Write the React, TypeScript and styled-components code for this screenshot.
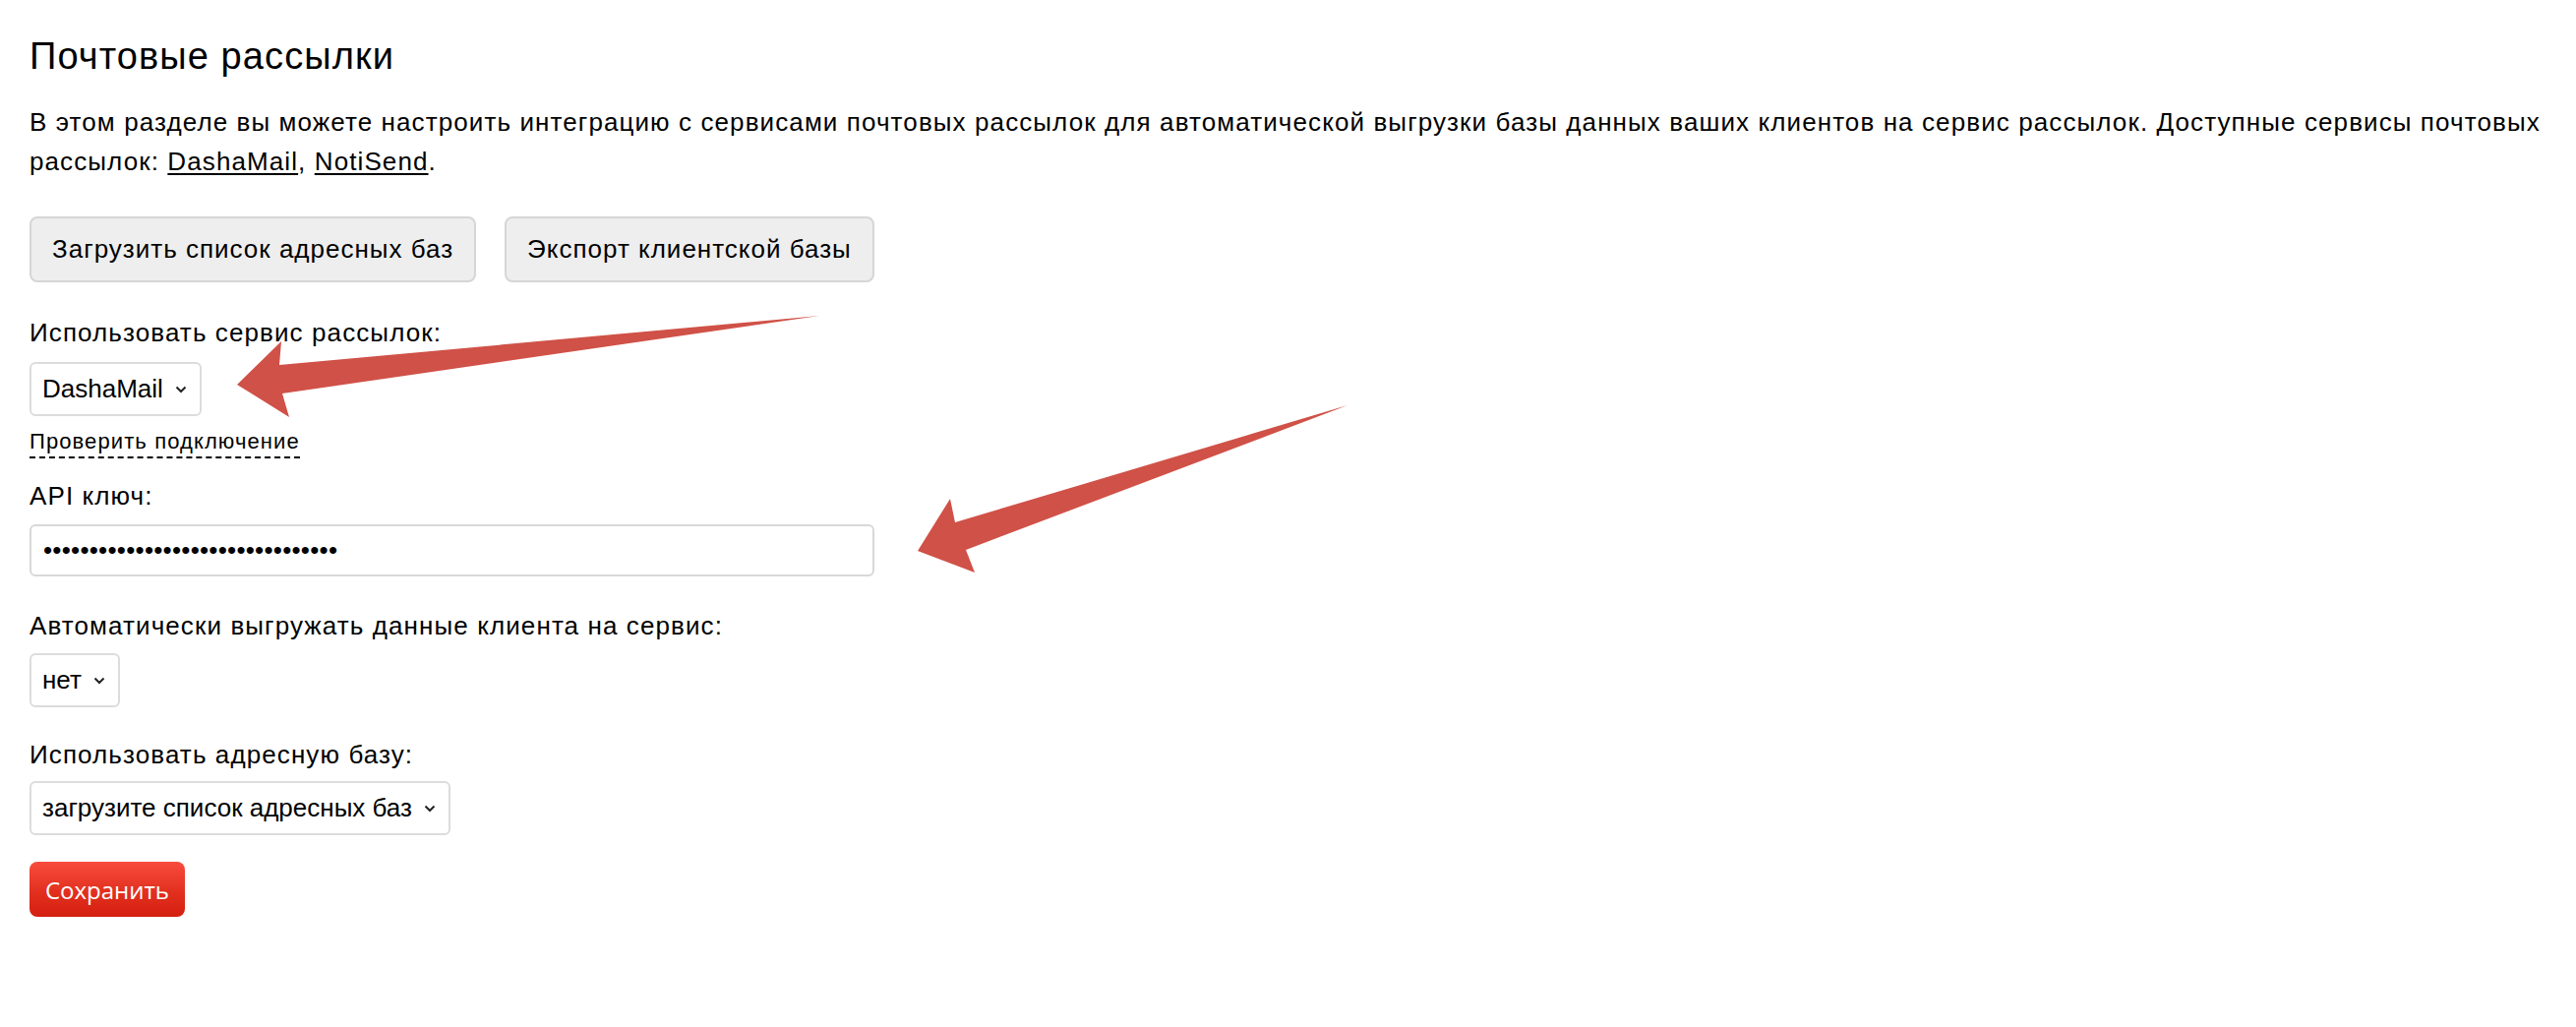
import React from "react";
import styled, { createGlobalStyle } from "styled-components";

const GlobalStyle = createGlobalStyle`
  html, body { margin: 0; padding: 0; background: #ffffff; }
  body {
    font-family: "Liberation Sans", Arial, sans-serif;
    color: #000000;
  }
  * { box-sizing: border-box; }
`;

const Page = styled.div`
  position: relative;
  padding: 35px 16px 60px 30px;
`;

const Title = styled.h1`
  margin: 0;
  font-size: 38px;
  line-height: 44px;
  font-weight: normal;
  letter-spacing: 1.1px;
`;

const Intro = styled.p`
  margin: 25px 0 0 0;
  font-size: 26px;
  line-height: 40px;
  letter-spacing: 1.1px;
`;

const ServiceLink = styled.a`
  color: #000;
  text-decoration: underline;
  text-underline-offset: 3px;
  text-decoration-thickness: 2px;
`;

const ButtonRow = styled.div`
  display: flex;
  gap: 29px;
  margin-top: 36px;
`;

const GreyButton = styled.button`
  height: 67px;
  padding: 0 21px;
  background: #eeeeee;
  border: 2px solid #d6d6d6;
  border-radius: 8px;
  font-family: "Liberation Sans", Arial, sans-serif;
  font-size: 26px;
  letter-spacing: 1px;
  color: #000;
`;

const Label = styled.div<{ $top: number }>`
  margin-top: ${(p) => p.$top}px;
  font-size: 26px;
  line-height: 40px;
  letter-spacing: 1.1px;
`;

const SelectBox = styled.div<{ $top: number }>`
  margin-top: ${(p) => p.$top}px;
  display: inline-flex;
  align-items: center;
  gap: 12px;
  height: 55px;
  padding: 0 13px 0 11px;
  border: 2px solid #dcdcdc;
  border-radius: 6px;
  font-size: 26px;
  background: #fff;
`;

const FieldRow = styled.div`
  display: flex;
`;

const CheckLink = styled.span`
  display: inline-block;
  margin-top: 11px;
  font-size: 22px;
  line-height: 30px;
  letter-spacing: 1.1px;
  border-bottom: 2px dashed #000;
`;

const PasswordInput = styled.input`
  display: block;
  margin-top: 9px;
  width: 859px;
  height: 53px;
  padding: 0 12px;
  border: 2px solid #d8d8d8;
  border-radius: 6px;
  font-family: "Liberation Sans", Arial, sans-serif;
  font-size: 26px;
  letter-spacing: 0.25px;
  color: #000;
  outline: none;
`;

const SaveButton = styled.button`
  display: block;
  margin-top: 27px;
  width: 158px;
  height: 56px;
  border: none;
  border-radius: 8px;
  background: linear-gradient(to bottom, #f84c3e 0%, #e2301f 55%, #d41f0f 100%);
  color: #ffffff;
  font-family: "Open Sans", "Noto Sans", sans-serif;
  font-size: 24px;
  padding: 0;
`;

const ArrowLayer = styled.svg`
  position: absolute;
  left: 0;
  top: 0;
  width: 1400px;
  height: 700px;
  pointer-events: none;
`;

const Chevron = () => (
  <svg width="12" height="8" viewBox="0 0 12 8">
    <path d="M1.5 1.5 L6 6 L10.5 1.5" fill="none" stroke="#222" strokeWidth="2" />
  </svg>
);

export default function App() {
  return (
    <>
      <GlobalStyle />
      <Page>
        <Title>Почтовые рассылки</Title>
        <Intro>
          В этом разделе вы можете настроить интеграцию с сервисами почтовых рассылок для
          автоматической выгрузки базы данных ваших клиентов на сервис рассылок. Доступные
          сервисы почтовых рассылок: <ServiceLink href="#">DashaMail</ServiceLink>,{" "}
          <ServiceLink href="#">NotiSend</ServiceLink>.
        </Intro>
        <ButtonRow>
          <GreyButton>Загрузить список адресных баз</GreyButton>
          <GreyButton>Экспорт клиентской базы</GreyButton>
        </ButtonRow>

        <Label $top={31}>Использовать сервис рассылок:</Label>
        <FieldRow>
          <SelectBox $top={10}>
            DashaMail
            <Chevron />
          </SelectBox>
        </FieldRow>
        <FieldRow>
          <CheckLink>Проверить подключение</CheckLink>
        </FieldRow>

        <Label $top={18}>API ключ:</Label>
        <PasswordInput type="password" readOnly value="abcdefghijabcdefghijabcdefghij12" />

        <Label $top={30}>Автоматически выгружать данные клиента на сервис:</Label>
        <FieldRow>
          <SelectBox $top={8}>
            нет
            <Chevron />
          </SelectBox>
        </FieldRow>

        <Label $top={28}>Использовать адресную базу:</Label>
        <FieldRow>
          <SelectBox $top={7}>
            загрузите список адресных баз
            <Chevron />
          </SelectBox>
        </FieldRow>

        <SaveButton>Сохранить</SaveButton>

        <ArrowLayer viewBox="0 0 1400 700">
          <polygon
            points="241,391 286,347 284,371 833,321 287,400 294,424"
            fill="#d05147"
          />
          <polygon
            points="933,560 966,507 971,531 1370,412 982,559 991,582"
            fill="#d05147"
          />
        </ArrowLayer>
      </Page>
    </>
  );
}
